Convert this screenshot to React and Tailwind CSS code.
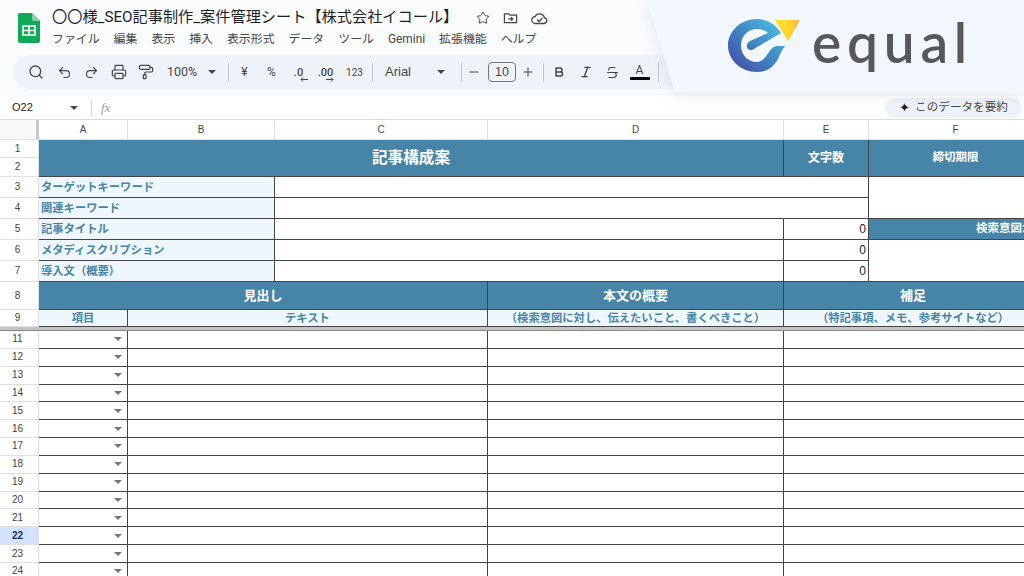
import React from "react";
import { Search, Undo2, Redo2, Printer, PaintRoller, Star, Minus, Plus, Bold, Italic, Strikethrough } from "lucide-react";

const sans = "font-['Liberation_Sans','Noto_Sans_CJK_JP',sans-serif]";
const ui = "font-['Roboto','Noto_Sans_CJK_JP',sans-serif]";

const menus = ["ファイル", "編集", "表示", "挿入", "表示形式", "データ", "ツール", "Gemini", "拡張機能", "ヘルプ"];
const bodyRows = [11, 12, 13, 14, 15, 16, 17, 18, 19, 20, 21, 22, 23, 24];

const Caret = ({ className = "" }) => (
  <svg width="8" height="4" viewBox="0 0 8 4" className={className}>
    <path d="M0 0h8L4 4z" fill="currentColor" />
  </svg>
);

const Divider = () => <div className="mx-[4px] h-[19px] w-px bg-[#c7c7c7]" />;

const Tool = ({ children, className = "w-[27px]" }) => (
  <div className={`flex shrink-0 items-center justify-center text-[#444746] ${className}`}>{children}</div>
);

const SheetsLogo = () => (
  <svg width="22" height="30" viewBox="0 0 22 30">
    <path d="M2 0h12l8 8v20a2 2 0 0 1-2 2H2a2 2 0 0 1-2-2V2a2 2 0 0 1 2-2z" fill="#0fa958" />
    <path d="M14 0l8 8h-6a2 2 0 0 1-2-2z" fill="#7fd3a6" />
    <path d="M5 13h12v9H5z" fill="none" stroke="#fff" strokeWidth="1.6" />
    <path d="M5 17.5h12M11 13v9" stroke="#fff" strokeWidth="1.6" />
  </svg>
);

const Logo = () => (
  <svg width="90" height="70" viewBox="720 10 90 70">
    <defs>
      <linearGradient id="ring" x1="0" y1="1" x2="1" y2="0">
        <stop offset="0" stopColor="#4a43a5" />
        <stop offset="0.45" stopColor="#3f7fc0" />
        <stop offset="1" stopColor="#50c8e6" />
      </linearGradient>
      <linearGradient id="tip" x1="0" y1="0" x2="1" y2="0">
        <stop offset="0" stopColor="#ffe02e" />
        <stop offset="0.7" stopColor="#ffd030" />
        <stop offset="1" stopColor="#f9a94a" />
      </linearGradient>
    </defs>
    <path
      d="M781 33C775 24 767 19 757 19C741 19 728 31 728 45.5C728 60 741 72 757 72C768 72 774 66 778 59C780 54 782 50 785 46L777 46C768 47 767 62 757 62C747 62 741 54 741 45.5C741 36 748 29 757 29C761 29 765 30 768 33L750 41C745 44 746 51 752 50Z"
      fill="url(#ring)"
    />
    <path d="M775 20H798Q800 20 799 22L788 41Z" fill="url(#tip)" />
  </svg>
);

const Cell = ({ className = "", children }) => (
  <div className={`flex min-w-0 items-center overflow-hidden whitespace-nowrap border-r border-b border-[#454545] ${className}`}>
    {children}
  </div>
);

const RowNum = ({ n, active }) => (
  <div
    className={`flex items-center justify-center border-r border-b border-[#e0e0e0] pr-[3px] pb-[1px] text-[10px] ${
      active ? "bg-[#d3e3fd] font-bold text-[#0b2f6b]" : "bg-white text-[#444]"
    }`}
  >
    {n}
  </div>
);

const Head = ({ className = "", children }) => (
  <Cell className={`justify-center bg-[#4785a8] font-bold text-white ${className}`}>{children}</Cell>
);

const Label = ({ children }) => (
  <Cell className="col-span-2 bg-[#eff7fe] pl-[2px] text-[11.3px] font-bold text-[#4785a8]">{children}</Cell>
);

const Sub = ({ className = "", children }) => (
  <Cell className={`justify-center bg-[#eff7fe] text-[11.3px] font-bold text-[#4785a8] ${className}`}>{children}</Cell>
);

const Zero = () => <Cell className="justify-end bg-white pr-[2px] text-[12px] text-[#222]">0</Cell>;

const ColHead = ({ children }) => (
  <div className="flex items-center justify-center border-r border-b border-[#e0e0e0] bg-white text-[10px] text-[#444]">
    {children}
  </div>
);

export default function App() {
  return (
    <div className={`relative h-[576px] w-[1024px] overflow-hidden bg-white ${sans}`}>
      {/* doc header */}
      <header className="h-[96px] bg-[#f9fbfd] pl-[13px]">
        <div className="flex h-[55px] items-start">
          <div className="ml-[5px] mt-[13px]">
            <SheetsLogo />
          </div>
          <div className={`ml-[12px] ${ui}`}>
            <div className="flex h-[32px] items-center pt-[4px] text-[#1f1f1f]">
              <span className="text-[15.2px] leading-none">〇〇様_SEO記事制作_案件管理シート【株式会社イコール】</span>
              <div className="ml-[18px] flex items-center gap-[13px] text-[#444746]">
                <Star size={14} strokeWidth={1.7} />
                <svg width="15" height="14" viewBox="0 0 16 14" fill="none" stroke="currentColor" strokeWidth="1.3">
                  <path d="M1.5 2.500h4.500l1.500 1.500h7v8h-13z" />
                  <path d="M5.500 8h5M8.500 6l2 2-2 2" />
                </svg>
                <svg width="17" height="13" viewBox="0 0 17 13" fill="none" stroke="currentColor" strokeWidth="1.3">
                  <path d="M4.500 11.500a3.500 3.500 0 0 1-.4-7A5 5 0 0 1 13.400 5.600a3 3 0 0 1-.4 5.900z" />
                  <path d="M6 7.500l2 2 3.500-3.500" />
                </svg>
              </div>
            </div>
            <nav className="flex h-[15px] items-center gap-[14px] text-[11.9px] leading-none text-[#444746]">
              {menus.map((m) => (
                <span key={m}>{m}</span>
              ))}
            </nav>
          </div>
        </div>
        {/* toolbar */}
        <div className={`flex h-[34px] items-center rounded-l-[17px] bg-[#eef3fa] pl-[9px] text-[#444746] ${ui}`}>
          <Tool><Search size={16} strokeWidth={2} /></Tool>
          <Tool className="ml-[2px] w-[27px]"><Undo2 size={15} strokeWidth={1.8} /></Tool>
          <Tool><Redo2 size={15} strokeWidth={1.8} /></Tool>
          <Tool><Printer size={16} strokeWidth={1.8} /></Tool>
          <Tool><PaintRoller size={16} strokeWidth={1.8} /></Tool>
          <div className="ml-[8px] w-[39px] text-[12.500px]">100%</div>
          <Caret className="ml-[2px]" />
          <div className="ml-[8px]"><Divider /></div>
          <Tool className="-ml-[2px] w-[27px]"><span className="text-[12px]">¥</span></Tool>
          <Tool><span className="text-[12px]">%</span></Tool>
          <Tool>
            <span className="relative text-[11px] font-medium leading-none">
              .0
              <svg width="8" height="5" viewBox="0 0 8 5" className="absolute left-[6px] top-[10px]" fill="none" stroke="currentColor">
                <path d="M8 2.500H1M3 .5l-2 2 2 2" />
              </svg>
            </span>
          </Tool>
          <Tool>
            <span className="relative text-[11px] font-medium leading-none">
              .00
              <svg width="8" height="5" viewBox="0 0 8 5" className="absolute left-[8px] top-[10px]" fill="none" stroke="currentColor">
                <path d="M0 2.500h7M5 .5l2 2-2 2" />
              </svg>
            </span>
          </Tool>
          <Tool className="ml-[2px] w-[27px]"><span className="text-[10px]">123</span></Tool>
          <Divider />
          <div className={`ml-[8px] w-[52px] text-[13px] ${sans}`}>Arial</div>
          <Caret />
          <div className="ml-[12px]"><Divider /></div>
          <Tool className="w-[16px]"><Minus size={14} strokeWidth={1.8} /></Tool>
          <div className={`ml-[6px] flex h-[20px] w-[28px] items-center justify-center rounded-[4px] border border-[#747775] text-[12.500px] ${sans}`}>10</div>
          <Tool className="ml-[2px] w-[20px]"><Plus size={14} strokeWidth={1.8} /></Tool>
          <div className="ml-[1px]"><Divider /></div>
          <Tool className="w-[22px]"><Bold size={12} strokeWidth={3} /></Tool>
          <Tool className="ml-[2px] w-[27px]"><Italic size={14} strokeWidth={2.4} /></Tool>
          <Tool><Strikethrough size={15} strokeWidth={1.8} /></Tool>
          <Tool>
            <span className="flex flex-col items-center text-[12px] leading-[13px]">
              A
              <span className="h-[3px] w-[20px] bg-black" />
            </span>
          </Tool>
          <div className="ml-[1px]"><Divider /></div>
        </div>
      </header>

      {/* formula bar */}
      <div className="flex h-[24px] items-center border-b border-[#dadce0] bg-white">
        <span className="ml-[12px] w-[58px] text-[11px] text-[#222]">O22</span>
        <Caret className="text-[#444]" />
        <div className="ml-[13px] h-[16px] w-px bg-[#d5d5d5]" />
        <span className="ml-[9px] font-['Liberation_Serif',serif] text-[13px] italic text-[#9aa0a6]">fx</span>
        <div className={`ml-auto mr-[2px] flex h-[20px] w-[137px] items-center justify-center gap-[5px] rounded-full bg-[#eef2f9] text-[11.600px] text-[#444746] ${ui}`}>
          <span className="text-[13px] leading-none text-[#1f1f1f]">✦</span>
          <span>このデータを要約</span>
        </div>
      </div>

      {/* sheet */}
      <div className="grid grid-cols-[39px_89px_147px_213px_296px_85px_174px] grid-rows-[20px_18px_19px_21px_21px_21px_21px_21px_28px_17px_4px_repeat(14,17.85px)]">
        <div className="flex justify-end border-b border-[#e0e0e0] bg-[#f8f9fa]">
          <div className="w-[3px] bg-[#c7c7c7]" />
        </div>
        {["A", "B", "C", "D", "E", "F"].map((c) => (
          <ColHead key={c}>{c}</ColHead>
        ))}

        <RowNum n={1} />
        <Head className="col-span-4 row-span-2 text-[15.600px]">記事構成案</Head>
        <Head className="row-span-2 text-[12px]">文字数</Head>
        <Head className="row-span-2 text-[11.500px]">締切期限</Head>
        <RowNum n={2} />

        <RowNum n={3} />
        <Label>ターゲットキーワード</Label>
        <Cell className="col-span-3 bg-white" />
        <Cell className="row-span-2 bg-white" />
        <RowNum n={4} />
        <Label>関連キーワード</Label>
        <Cell className="col-span-3 bg-white" />

        <RowNum n={5} />
        <Label>記事タイトル</Label>
        <Cell className="col-span-2 bg-white" />
        <Zero />
        <Cell className="bg-[#4785a8] pl-[107px] text-[11.500px] font-bold text-white">検索意図から</Cell>

        <RowNum n={6} />
        <Label>メタディスクリプション</Label>
        <Cell className="col-span-2 bg-white" />
        <Zero />
        <Cell className="row-span-2 bg-white" />
        <RowNum n={7} />
        <Label>導入文（概要）</Label>
        <Cell className="col-span-2 bg-white" />
        <Zero />

        <RowNum n={8} />
        <Head className="col-span-3 text-[13px]">見出し</Head>
        <Head className="text-[13px]">本文の概要</Head>
        <Head className="col-span-2 text-[13px]">補足</Head>

        <RowNum n={9} />
        <Sub>項目</Sub>
        <Sub className="col-span-2">テキスト</Sub>
        <Sub>（検索意図に対し、伝えたいこと、書くべきこと）</Sub>
        <Sub className="col-span-2">（特記事項、メモ、参考サイトなど）</Sub>

        <div className="col-span-7 border-b border-[#8a8a8a] bg-[#c4c4c4]" />

        {bodyRows.map((n) => (
          <React.Fragment key={n}>
            <RowNum n={n} active={n === 22} />
            <Cell className="justify-end pr-[5px] text-[#757575]"><Caret /></Cell>
            <Cell className="col-span-2" />
            <Cell />
            <Cell className="col-span-2" />
          </React.Fragment>
        ))}
      </div>

      {/* logo banner laid over the sheet */}
      <div className="absolute right-0 top-0 w-[377px] drop-shadow-[0_3px_8px_rgba(90,100,120,0.13)]">
        <div className="flex h-[93px] items-start bg-[#f1f7fc] [clip-path:polygon(0_0,100%_0,100%_100%,28px_100%)]">
          <div className="ml-[73px] mt-[10px] shrink-0">
            <Logo />
          </div>
          <span className="ml-[2px] mt-[8px] font-['Lato',sans-serif] text-[55px] font-semibold leading-[68px] tracking-[0.105em] text-[#58585a]">
            equal
          </span>
        </div>
      </div>
    </div>
  );
}
